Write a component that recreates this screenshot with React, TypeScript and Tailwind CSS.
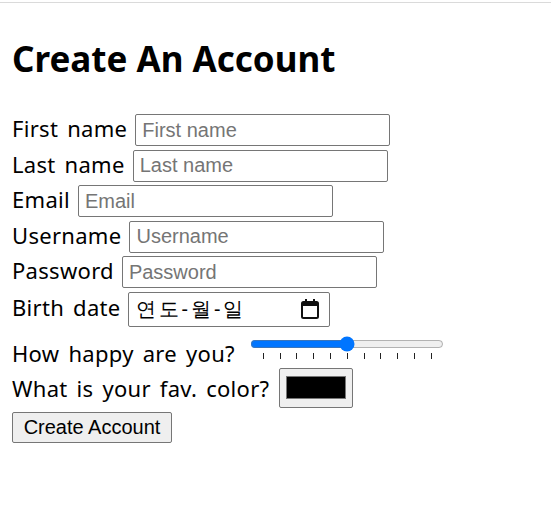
import { useState } from "react"

const labelFont = "font-['Noto_Sans','Open_Sans',sans-serif] tracking-[0.3px] [word-spacing:3px]"
const fieldFont = "font-['Liberation_Sans',Arial,sans-serif] tracking-normal [word-spacing:0]"

const fields = [
  { label: "First name", type: "text" },
  { label: "Last name", type: "text" },
  { label: "Email", type: "email" },
  { label: "Username", type: "text" },
  { label: "Password", type: "password" },
]

function CalendarIcon() {
  return (
    <svg width="20" height="22" viewBox="0 0 20 22" className="text-[#111]">
      <rect x="2" y="4" width="16" height="16" rx="1.5" fill="none" stroke="currentColor" strokeWidth="2" />
      <rect x="2" y="4" width="16" height="4" fill="currentColor" />
      <rect x="5" y="1" width="2" height="4" fill="currentColor" />
      <rect x="13" y="1" width="2" height="4" fill="currentColor" />
    </svg>
  )
}

export default function App() {
  const [happy, setHappy] = useState(50)
  const [color, setColor] = useState("#000000")

  return (
    <div className="min-h-[507px] bg-white text-black">
      <div className="h-[2px]" />
      <div className="h-px bg-[#dadada]" />

      <form className={`px-3 ${labelFont}`} onSubmit={e => e.preventDefault()}>
        <h1 className="pt-[33px] pb-[33px] text-[35px] leading-[45px] font-bold tracking-normal [word-spacing:0]">Create An Account</h1>

        <div className="flex flex-col gap-[3.5px]">
          {fields.map(f => (
            <div key={f.label} className="flex items-center h-[32px]">
              <label className="text-[22px] leading-none mr-[8px] -translate-y-[2px]">{f.label}</label>
              <input
                type={f.type}
                placeholder={f.label}
                className={`${fieldFont} w-[255px] h-[32px] px-[6px] text-[20px] border border-[#767676] rounded-[2px] placeholder:text-[#757575] outline-none`}
              />
            </div>
          ))}

          <div className="flex items-center h-[35px]">
            <label className="text-[22px] leading-none mr-[7px] -translate-y-[2px]">Birth date</label>
            <div className="w-[202px] h-[35px] flex items-center justify-between pl-[7px] pr-[9px] border border-[#767676] rounded-[2px]">
              <span className="text-[20px] leading-none tracking-[3px] [word-spacing:0]">연도-월-일</span>
              <CalendarIcon />
            </div>
          </div>
        </div>

        <div className="flex items-end h-[41px]">
          <label className="text-[22px] leading-[30px] mr-[15px]">How happy are you?</label>
          <div className="relative w-[194px] h-[41px]">
            <input
              type="range"
              min={0}
              max={100}
              step={10}
              value={happy}
              onChange={e => setHappy(Number(e.target.value))}
              className="absolute left-0 top-[8px] w-[194px] h-[18px] accent-[#0075ff]"
            />
            <div className="absolute left-[13px] right-[12px] top-[26px] flex justify-between pointer-events-none">
              {Array.from({ length: 11 }).map((_, i) => (
                <span key={i} className="block w-px h-[6px] bg-[#222]" />
              ))}
            </div>
          </div>
        </div>

        <div className="flex items-center h-[40px]">
          <label className="text-[22px] leading-none mr-[10px]">What is your fav. color?</label>
          <label className="w-[74px] h-[40px] flex items-center justify-center bg-[#efefef] border border-[#767676] rounded-[2px] cursor-pointer">
            <span className="block w-[60px] h-[23px] border border-[#777]" style={{ backgroundColor: color }} />
            <input type="color" value={color} onChange={e => setColor(e.target.value)} className="sr-only" />
          </label>
        </div>

        <button
          type="submit"
          className={`${fieldFont} mt-[4px] w-[160px] h-[31px] text-[20px] leading-none bg-[#efefef] border border-[#767676] rounded-[2px]`}
        >
          Create Account
        </button>
      </form>
    </div>
  )
}
